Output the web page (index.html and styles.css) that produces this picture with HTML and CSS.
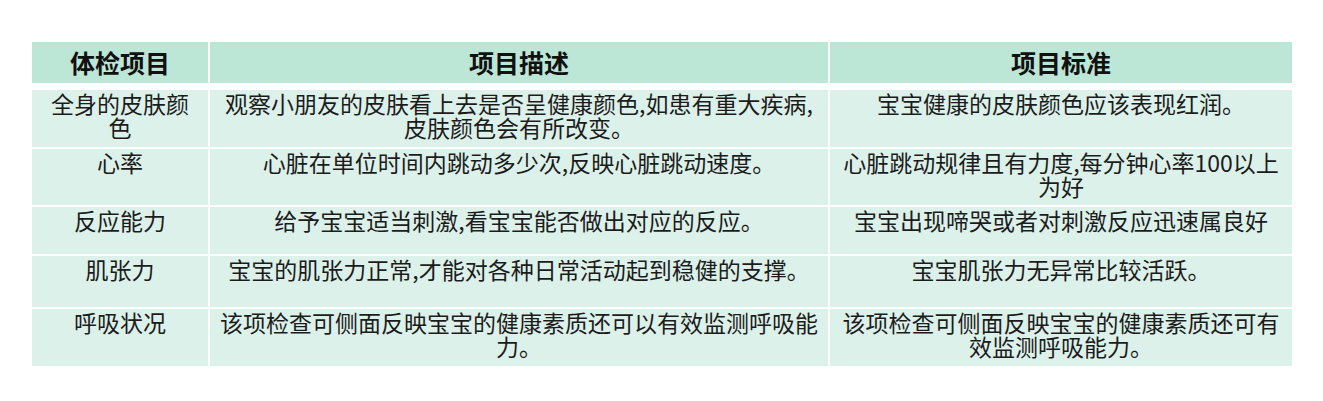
FILE: index.html
```html
<!DOCTYPE html>
<html lang="zh-CN">
<head>
<meta charset="utf-8">
<title>体检项目</title>
<link rel="stylesheet" href="styles.css">
</head>
<body>
<div class="page">
  <div class="table">
    <div class="cell head">体检项目</div>
    <div class="cell head">项目描述</div>
    <div class="cell head">项目标准</div>

    <div class="cell">全身的皮肤颜<br>色</div>
    <div class="cell">观察小朋友的皮肤看上去是否呈健康颜色,如患有重大疾病,<br>皮肤颜色会有所改变。</div>
    <div class="cell">宝宝健康的皮肤颜色应该表现红润。</div>

    <div class="cell">心率</div>
    <div class="cell">心脏在单位时间内跳动多少次,反映心脏跳动速度。</div>
    <div class="cell">心脏跳动规律且有力度,每分钟心率100以上<br>为好</div>

    <div class="cell">反应能力</div>
    <div class="cell">给予宝宝适当刺激,看宝宝能否做出对应的反应。</div>
    <div class="cell">宝宝出现啼哭或者对刺激反应迅速属良好</div>

    <div class="cell">肌张力</div>
    <div class="cell">宝宝的肌张力正常,才能对各种日常活动起到稳健的支撑。</div>
    <div class="cell">宝宝肌张力无异常比较活跃。</div>

    <div class="cell">呼吸状况</div>
    <div class="cell">该项检查可侧面反映宝宝的健康素质还可以有效监测呼吸能<br>力。</div>
    <div class="cell">该项检查可侧面反映宝宝的健康素质还可有<br>效监测呼吸能力。</div>
  </div>
</div>
</body>
</html>
```

FILE: styles.css
```css
html, body {
  margin: 0;
  padding: 0;
  background: #ffffff;
}

.page {
  padding: 42px 0 0 32px;
  font-family: "Noto Sans CJK SC", "Microsoft YaHei", sans-serif;
  color: #1c1c1c;
}

.table {
  display: grid;
  grid-template-columns: 176px 618px 462px;
  grid-template-rows: 46px 57px 56px 47px 51px 57px;
  column-gap: 2px;
  row-gap: 2px;
  width: 1260px;
}

.cell {
  background: #dcf1ea;
  font-size: 23px;
  line-height: 24px;
  text-align: center;
  padding-top: 1px;
  box-sizing: border-box;
  white-space: nowrap;
}

.cell.head {
  background: #bce6d5;
  height: 41px;
  align-self: start;
  padding-top: 0;
  font-size: 25px;
  font-weight: 700;
  line-height: 41px;
  color: #111111;
}
```
